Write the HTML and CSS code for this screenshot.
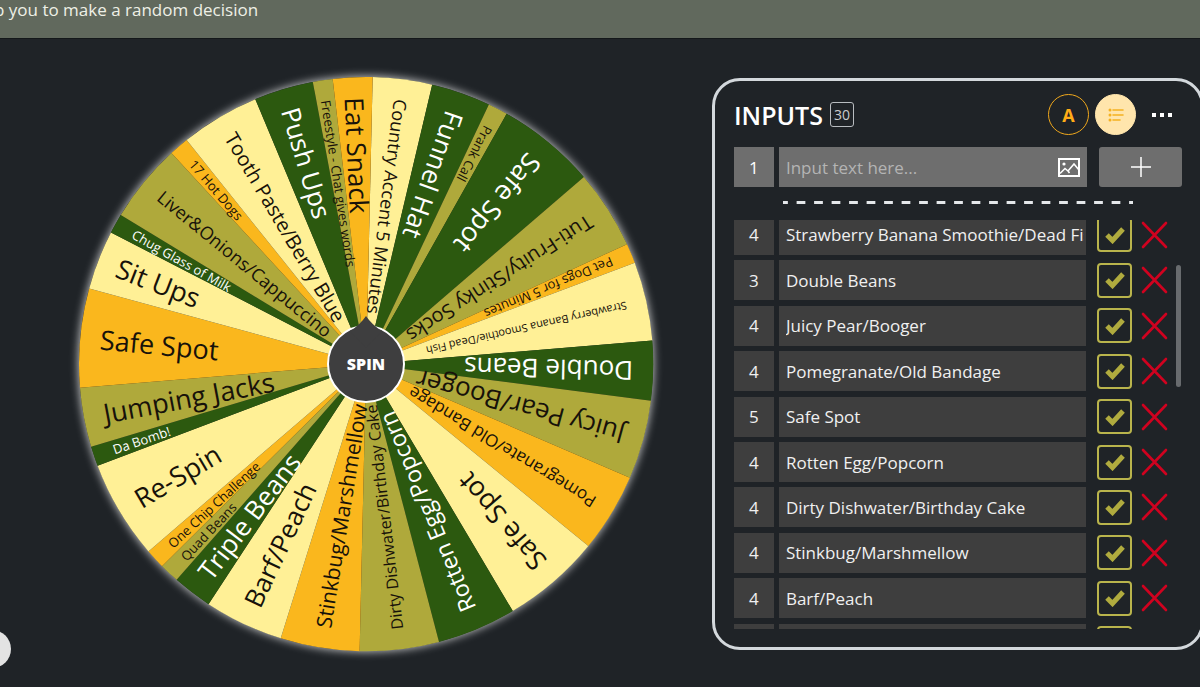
FILE: index.html
```
<!DOCTYPE html>
<html lang="en">
<head>
    <meta charset="UTF-8">
    <title>Spin the Wheel</title>
    <link rel="stylesheet" href="styles.css">
</head>

<body>

<header class="banner">
    <p>p you to make a random decision</p>
</header>

<main>
    <section class="wheel-area">
        <div class="wheel-box">
            <svg class="wheel" id="wheel" viewBox="-286 -286 572 572" role="img" aria-label="Wheel"></svg>
            <button class="spin" type="button">
                <svg viewBox="0 0 80 90" aria-hidden="true">
                    <circle class="spin-ring" cx="40" cy="50" r="38"/>
                    <path class="spin-tip" d="M40 2 Q46 11 56 17 L40 34 L24 17 Q34 11 40 2z"/>
                </svg>
                <span>SPIN</span>
            </button>
        </div>
    </section>

    <section class="panel">
        <div class="panel-head">
            <h2>INPUTS</h2>
            <span class="count">30</span>
            <button class="round" type="button" aria-label="Text mode">A</button>
            <button class="round active" type="button" aria-label="List mode">
                <svg width="16" height="14" viewBox="0 0 16 14">
                    <g fill="#f5b120"><circle cx="2" cy="2" r="1.5"/><circle cx="2" cy="7" r="1.5"/><circle cx="2" cy="12" r="1.5"/></g>
                    <path d="M5 2H15M5 7H15M5 12H12" stroke="#f5b120" stroke-width="1.6" stroke-linecap="round"/>
                </svg>
            </button>
            <button class="dots" type="button" aria-label="More">
                <svg width="20" height="4" viewBox="0 0 20 4"><path d="M0 0h4v4H0zM8 0h4v4H8zM16 0h4v4h-4z" fill="#fff"/></svg>
            </button>
        </div>

        <form class="add-row">
            <input class="num" type="text" value="1" aria-label="Weight">
            <div class="entry">
                <input type="text" placeholder="Input text here..." aria-label="New input">
                <button type="button" aria-label="Add image">
                    <svg width="22" height="19" viewBox="0 0 22 19" fill="none" stroke="#fff">
                        <rect x="1" y="1" width="20" height="17" stroke-width="2"/>
                        <circle cx="6" cy="6" r="1.6" fill="#fff" stroke="none"/>
                        <path d="M2 15.5l5-5 3 2.5 6-7 5 6M10 13l1.5 2" stroke-width="1.6"/>
                    </svg>
                </button>
            </div>
            <button class="add" type="button" aria-label="Add">
                <svg width="20" height="20" viewBox="0 0 20 20"><path d="M10 0V20M0 10H20" stroke="#fff" stroke-width="1.5"/></svg>
            </button>
        </form>

        <div class="dashes"></div>

        <div class="list-wrap">
            <ul class="list" id="list"></ul>
            <div class="thumb"></div>
        </div>
    </section>
</main>

<button class="corner" type="button" aria-label="Open menu"></button>

<script src="wheel.js"></script>
</body>
</html>
```
FILE: styles.css
```
* { margin: 0; padding: 0; box-sizing: border-box; }
body {
    font-family: 'Open Sans', 'Noto Sans', sans-serif;
    color: #fff; background: #1f2327;
    min-height: 100vh; overflow: hidden;
}
button, input { font: inherit; color: inherit; border: none; background: none; }
button { cursor: pointer; }
svg { display: block; }

.banner {
    background: #61695d; height: 39px;
    border-bottom: 1px solid #14181a;
    overflow: hidden;
}
.banner p {
    font-size: 17px; line-height: 20px; color: #eef0e6;
    margin-left: -6px; white-space: nowrap;
}

main {
    display: grid; grid-template-columns: 45fr 32fr;
    align-items: center;
    padding: 38px 0 0 20px; margin-right: -4px;
}

/* Wheel */
.wheel-area { display: flex; justify-content: center; }
.wheel-box {
    display: grid; place-items: center;
    width: 83%; max-width: 640px;
}
.wheel-box > * { grid-area: 1 / 1; }
.wheel {
    width: 100%; overflow: visible; border-radius: 50%;
    box-shadow: 0 0 8px 1px rgba(255,255,255,0.7);
}
.wheel text { fill: #17120a; text-rendering: geometricPrecision; }
.wheel text.light { fill: #fff; }
.green { fill: #2c590f; }
.olive { fill: #afa93b; }
.orange { fill: #fab71d; }
.yellow { fill: #fff096; }

.spin { display: grid; place-items: center; width: 80px; padding-bottom: 10px; }
.spin > * { grid-area: 1 / 1; }
.spin svg { width: 80px; height: 90px; }
.spin span { font-size: 16px; font-weight: 800; padding-top: 10px; }
.spin-ring { fill: #3e3e3f; stroke: #fff; stroke-width: 2; }
.spin-tip { fill: #3e3e3f; }

/* Inputs panel */
.panel {
    border: 3px solid #d3d8dc; border-radius: 28px;
    padding: 13px 19px 18px;
}
.panel-head { display: flex; align-items: center; height: 41px; }
.panel-head h2 { font-size: 25px; font-weight: 600; line-height: 32px; }
.count {
    border: 1px solid #b8bcc0; border-radius: 3px;
    width: 24px; height: 25px; line-height: 23px;
    font-size: 14px; text-align: center; color: #c8cbce;
    margin: 0 auto 0 7px;
}
.round {
    width: 41px; height: 41px; border-radius: 50%;
    border: 1px solid #f0a81c; color: #ffad17;
    font-size: 18px; font-weight: 700; margin-right: 6px;
    display: flex; align-items: center; justify-content: center;
}
.round.active { background: #ffe5ac; border-color: #ffe5ac; }
.dots { padding: 8px 10px; }

.add-row { display: flex; height: 40px; margin-top: 12px; }
.num { width: 40px; flex: none; text-align: center; font-size: 17px; margin-right: 5px; }
.add-row .num, .entry, .add { background: #6e6e6e; }
.entry { flex: 1; display: flex; align-items: center; padding: 0 7px; margin-right: 12px; }
.entry input { flex: 1; min-width: 0; font-size: 17px; }
.entry input::placeholder { color: #b4b4b4; }
.add {
    width: 83px; border-radius: 3px;
    display: flex; align-items: center; justify-content: center;
}

.dashes {
    height: 3px; width: 350px; margin: 14px 0 16px 49px;
    background: linear-gradient(90deg, #e4e7ea 25%, transparent 25% 75%, #e4e7ea 75%);
    background-size: 5% 100%;
}

.list-wrap { display: flex; gap: 8px; height: 409px; overflow: hidden; padding-right: 1px; }
.list {
    flex: 1; min-width: 0; height: 100%;
    list-style: none; display: grid;
    grid-auto-rows: calc(100% / 9);
    margin-top: -8px;
}
.list li { display: flex; align-items: center; }
.list .num, .list .name { height: 40px; background: #3e3e3e; color: #f0f0f0; }
.list .name {
    flex: 1; min-width: 0; font-size: 17px;
    padding: 0 2px 0 7px; margin-right: 11px;
}
.list input[type="checkbox"] {
    appearance: none; width: 35px; height: 35px; flex: none;
    border: 2px solid #b9b44c; border-radius: 4px; margin-right: 9px;
}
.list input[type="checkbox"]:checked {
    background: url("data:image/svg+xml,%3Csvg xmlns='http://www.w3.org/2000/svg' viewBox='0 0 20 18'%3E%3Cpath d='M2 9L7.500 14.500L18 3' fill='none' stroke='%23b0ab3e' stroke-width='5'/%3E%3C/svg%3E") center / 20px 18px no-repeat;
}
.remove { width: 27px; flex: none; }
.thumb { width: 5px; height: 122px; margin-top: 45px; border-radius: 3px; background: #686b6e; }

.corner {
    position: fixed; left: -27px; bottom: 19px;
    width: 38px; height: 38px; border-radius: 50%;
    background: #e3e3e3;
}
```
FILE: wheel.js
```
const R = 286;
const START = 1.3; // degrees clockwise from the top

// [label, weight, colour, font size]
const slices = [
    ["Country Accent 5 Minutes", 3, "yellow", 18],
    ["Funnel Hat", 3, "green", 26],
    ["Prank Call", 1, "olive", 13],
    ["Safe Spot", 5, "green", 27],
    ["Tuti-Fruity/Stinky Socks", 4, "olive", 20],
    ["Pet Dogs for 5 Minutes", 1, "orange", 13],
    ["Strawberry Banana Smoothie/Dead Fish", 4, "yellow", 11],
    ["Double Beans", 3, "green", 26],
    ["Juicy Pear/Booger", 4, "olive", 26],
    ["Pomegranate/Old Bandage", 4, "orange", 17],
    ["Safe Spot", 5, "yellow", 27],
    ["Rotten Egg/Popcorn", 4, "green", 23],
    ["Dirty Dishwater/Birthday Cake", 4, "olive", 16],
    ["Stinkbug/Marshmellow", 4, "orange", 21],
    ["Barf/Peach", 4, "yellow", 26],
    ["Triple Beans", 2, "green", 26],
    ["Quad Beans", 1, "olive", 13],
    ["One Chip Challenge", 1, "orange", 13],
    ["Re-Spin", 5, "yellow", 27],
    ["Da Bomb!", 1, "green", 13],
    ["Jumping Jacks", 3, "olive", 27],
    ["Safe Spot", 5, "orange", 27],
    ["Sit Ups", 3, "yellow", 27],
    ["Chug Glass of Milk", 1, "green", 13],
    ["Liver&Onions/Cappuccino", 4, "olive", 18],
    ["17 Hot Dogs", 1, "orange", 13],
    ["Tooth Paste/Berry Blue", 4, "yellow", 20],
    ["Push Ups", 3, "green", 26],
    ["Freestyle - Chat gives words", 1, "olive", 13],
    ["Eat Snack", 2, "orange", 26]
];

const total = slices.reduce((sum, s) => sum + s[1], 0);
const svgNS = "http://www.w3.org/2000/svg";
const wheel = document.getElementById("wheel");

function add(tag, attrs) {
    const el = document.createElementNS(svgNS, tag);
    for (const key in attrs) el.setAttribute(key, attrs[key]);
    wheel.appendChild(el);
    return el;
}

function rim(deg) {
    const a = deg * Math.PI / 180;
    return (R * Math.sin(a)).toFixed(2) + " " + (-R * Math.cos(a)).toFixed(2);
}

const labels = [];
let angle = START;
slices.forEach(([label, weight, colour, size]) => {
    const end = angle + weight * 360 / total;
    add("path", { class: colour, d: `M0 0L${rim(angle)}A${R} ${R} 0 0 1 ${rim(end)}z` });
    labels.push({ label, size, colour, mid: (angle + end) / 2 });
    angle = end;
});

// labels go on top of every slice
labels.forEach(({ label, size, colour, mid }) => {
    const text = add("text", {
        x: -266, y: Math.round(size * 0.36), "font-size": size,
        transform: `rotate(${mid + 90})`
    });
    if (colour === "green") text.classList.add("light");
    text.textContent = label;
});

// rows in view
const list = document.getElementById("list");
slices.slice(6, 16).forEach(([label, weight]) => {
    const li = document.createElement("li");
    li.innerHTML = `
        <input class="num" type="text" value="${weight}" aria-label="Weight">
        <input class="name" type="text" value="${label}" aria-label="Label">
        <input type="checkbox" checked aria-label="Use ${label}">
        <button class="remove" type="button" aria-label="Remove">
            <svg width="27" height="28" viewBox="0 0 27 28"><path d="M2 2L25 26M25 2L2 26" stroke="#d0021f" stroke-width="2.6" stroke-linecap="round"/></svg>
        </button>`;
    list.appendChild(li);
});
```
